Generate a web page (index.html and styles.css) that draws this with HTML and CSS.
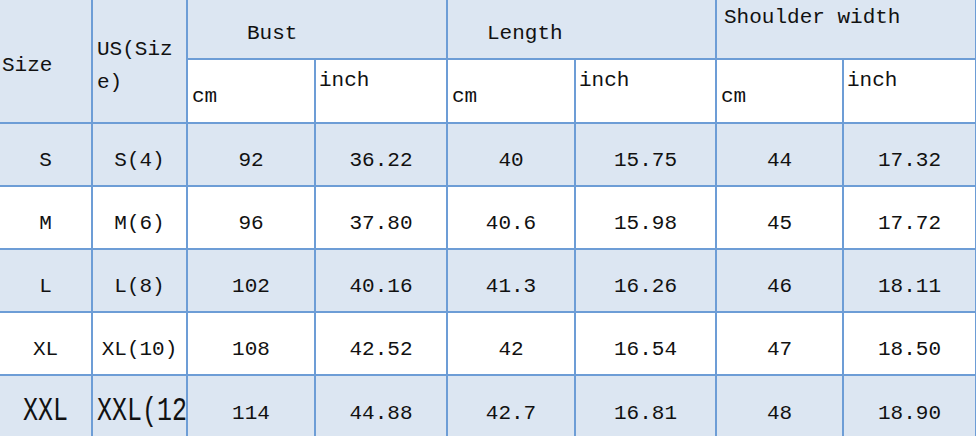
FILE: index.html
```html
<!DOCTYPE html>
<html>
<head>
<meta charset="utf-8">
<link rel="stylesheet" href="styles.css">
</head>
<body>
<table class="size-table">
  <colgroup>
    <col class="c-size"><col class="c-us"><col class="c-bcm"><col class="c-bin"><col class="c-lcm"><col class="c-lin"><col class="c-scm"><col class="c-sin">
  </colgroup>
  <tr class="head1">
    <td class="shade h-size" rowspan="2">Size</td>
    <td class="shade h-us" rowspan="2">US(Siz<br>e)</td>
    <td class="shade h-group h-bust" colspan="2">Bust</td>
    <td class="shade h-group h-length" colspan="2">Length</td>
    <td class="shade h-shoulder" colspan="2">Shoulder width</td>
  </tr>
  <tr class="head2">
    <td class="unit-cm">cm</td>
    <td class="unit-in">inch</td>
    <td class="unit-cm">cm</td>
    <td class="unit-in">inch</td>
    <td class="unit-cm">cm</td>
    <td class="unit-in">inch</td>
  </tr>
  <tr class="row shade">
    <td>S</td><td>S(4)</td><td>92</td><td>36.22</td><td>40</td><td>15.75</td><td>44</td><td>17.32</td>
  </tr>
  <tr class="row">
    <td>M</td><td>M(6)</td><td>96</td><td>37.80</td><td>40.6</td><td>15.98</td><td>45</td><td>17.72</td>
  </tr>
  <tr class="row shade">
    <td>L</td><td>L(8)</td><td>102</td><td>40.16</td><td>41.3</td><td>16.26</td><td>46</td><td>18.11</td>
  </tr>
  <tr class="row">
    <td>XL</td><td>XL(10)</td><td>108</td><td>42.52</td><td>42</td><td>16.54</td><td>47</td><td>18.50</td>
  </tr>
  <tr class="row shade last">
    <td><span class="tall">XXL</span></td><td class="clip"><span class="tall">XXL(12)</span></td><td>114</td><td>44.88</td><td>42.7</td><td>16.81</td><td>48</td><td>18.90</td>
  </tr>
</table>
</body>
</html>
```

FILE: styles.css
```css
html, body {
  margin: 0;
  padding: 0;
  overflow: hidden;
  background: #ffffff;
}

.size-table {
  border-collapse: collapse;
  table-layout: fixed;
  width: 976px;
  font-family: "Liberation Mono", "DejaVu Sans Mono", monospace;
  font-size: 21px;
  line-height: 24px;
  color: #111111;
}

.c-size { width: 92px; }
.c-us { width: 95px; }
.c-bcm { width: 128px; }
.c-bin { width: 132px; }
.c-lcm { width: 128px; }
.c-lin { width: 141px; }
.c-scm { width: 127px; }
.c-sin { width: 133px; }

.size-table td {
  border: 2px solid #6d9dd6;
  padding: 0;
  vertical-align: top;
  white-space: nowrap;
  overflow: hidden;
}

.size-table tr:first-child td { border-top: none; }
.size-table td:first-child { border-left: none; }
.size-table .head2 td:first-child { border-left: 2px solid #6d9dd6; }

.shade, .shade td { background: #dce6f2; }

.head1 { height: 59px; }
.head2 { height: 64px; }

.h-size {
  padding: 54px 0 0 2px !important;
  text-align: left;
}

.h-us {
  padding: 33px 0 0 4px !important;
  line-height: 33px;
  text-align: left;
}

.h-group {
  text-align: left;
  padding-top: 22px !important;
}

.h-bust { padding-left: 59px !important; }
.h-length { padding-left: 39px !important; }

.h-shoulder {
  text-align: left;
  padding: 6px 0 0 7px !important;
}

.unit-cm {
  background: #ffffff;
  padding: 25px 0 0 4px !important;
}

.unit-in {
  background: #ffffff;
  padding: 9px 0 0 3px !important;
}

.row { height: 63px; }
.row td {
  text-align: center;
  padding-top: 25px !important;
}

.row.last { height: 64px; }
.row.last td { padding-top: 26px !important; }

.row td.clip {
  text-align: left;
  padding-left: 4px !important;
}

.tall {
  display: inline-block;
  font-size: 25px;
  transform: scaleY(1.3);
  transform-origin: 50% 75%;
}
```
